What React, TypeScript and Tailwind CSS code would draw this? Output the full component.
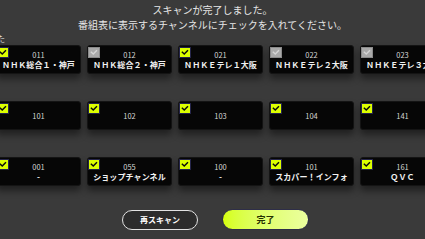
import React from 'react';

type Channel = { no: string; name?: string; checked: boolean };

const rows: Channel[][] = [
  [
    { no: '011', name: 'ＮＨＫ総合１・神戸', checked: true },
    { no: '012', name: 'ＮＨＫ総合２・神戸', checked: false },
    { no: '021', name: 'ＮＨＫＥテレ１大阪', checked: true },
    { no: '022', name: 'ＮＨＫＥテレ２大阪', checked: false },
    { no: '023', name: 'ＮＨＫＥテレ３大阪', checked: false },
  ],
  [
    { no: '101', checked: true },
    { no: '102', checked: true },
    { no: '103', checked: true },
    { no: '104', checked: true },
    { no: '141', checked: true },
  ],
  [
    { no: '001', name: '-', checked: true },
    { no: '055', name: 'ショップチャンネル', checked: true },
    { no: '100', name: '-', checked: true },
    { no: '101', name: 'スカパー！インフォ', checked: true },
    { no: '161', name: 'ＱＶＣ', checked: true },
  ],
];

function CheckBox({ checked }: { checked: boolean }) {
  return (
    <div
      className={`absolute left-0 top-[1px] w-[12px] h-[11px] border ${
        checked ? 'bg-[#dcff00] border-[#25254a]' : 'bg-[#a9a9a9] border-[#8a8a8a]'
      }`}
    >
      <svg viewBox="0 0 12 11" className="w-full h-full">
        <path
          d="M2.8 5.2 L5.1 7.3 L9 3.4"
          fill="none"
          stroke={checked ? '#0a0a0a' : '#d4d4d4'}
          strokeWidth="1.8"
          strokeLinecap="square"
        />
      </svg>
    </div>
  );
}

function Card({ ch }: { ch: Channel }) {
  return (
    <div className="relative shrink-0 w-[85px] h-[29px] rounded-[3px] bg-[#060606] border border-[#141414] shadow-[0_5px_7px_rgba(0,0,0,0.45)] flex flex-col items-center justify-center">
      <CheckBox checked={ch.checked} />
      <span className="text-[7.5px] leading-[10px] text-[#d6d6d6]">{ch.no}</span>
      {ch.name && (
        <span className="text-[8px] leading-[10px] font-bold text-[#f2f2f2] tracking-[0.1px] whitespace-nowrap">
          {ch.name}
        </span>
      )}
    </div>
  );
}

export default function App() {
  return (
    <div
      className="w-[425px] h-[239px] overflow-hidden bg-[#3a3a3a] flex flex-col"
      style={{ fontFamily: '"Noto Sans CJK JP", "Noto Sans", sans-serif' }}
    >
      {/* Header */}
      <div className="pt-[2px] text-center text-[10px] leading-[15px] text-[#e6e6e6]">
        <div>スキャンが完了しました。</div>
        <div>番組表に表示するチャンネルにチェックを入れてください。</div>
      </div>

      {/* Label (scrolled off to the left) */}
      <div className="h-[13px] text-[8px] leading-[13px] text-[#e6e6e6] ml-[-3px]">た</div>

      {/* Channel rows */}
      <div className="flex flex-col gap-[27px]">
        {rows.map((row, i) => (
          <div key={i} className="flex gap-[6px] ml-[-4px]">
            {row.map((ch, j) => (
              <Card key={j} ch={ch} />
            ))}
          </div>
        ))}
      </div>

      {/* Buttons */}
      <div className="mt-[23px] flex justify-center items-center gap-[24px] pl-[6px]">
        <button className="w-[76px] h-[20px] rounded-full border-[1.5px] border-[#e2e2e2] bg-[#2c2c2c] text-[8px] font-bold text-white">
          再スキャン
        </button>
        <button className="w-[87px] h-[21px] rounded-full border border-[#2e2e48] bg-gradient-to-r from-[#d6ff00] to-[#ebff9e] text-[9px] font-bold text-[#253000]">
          完了
        </button>
      </div>
    </div>
  );
}
